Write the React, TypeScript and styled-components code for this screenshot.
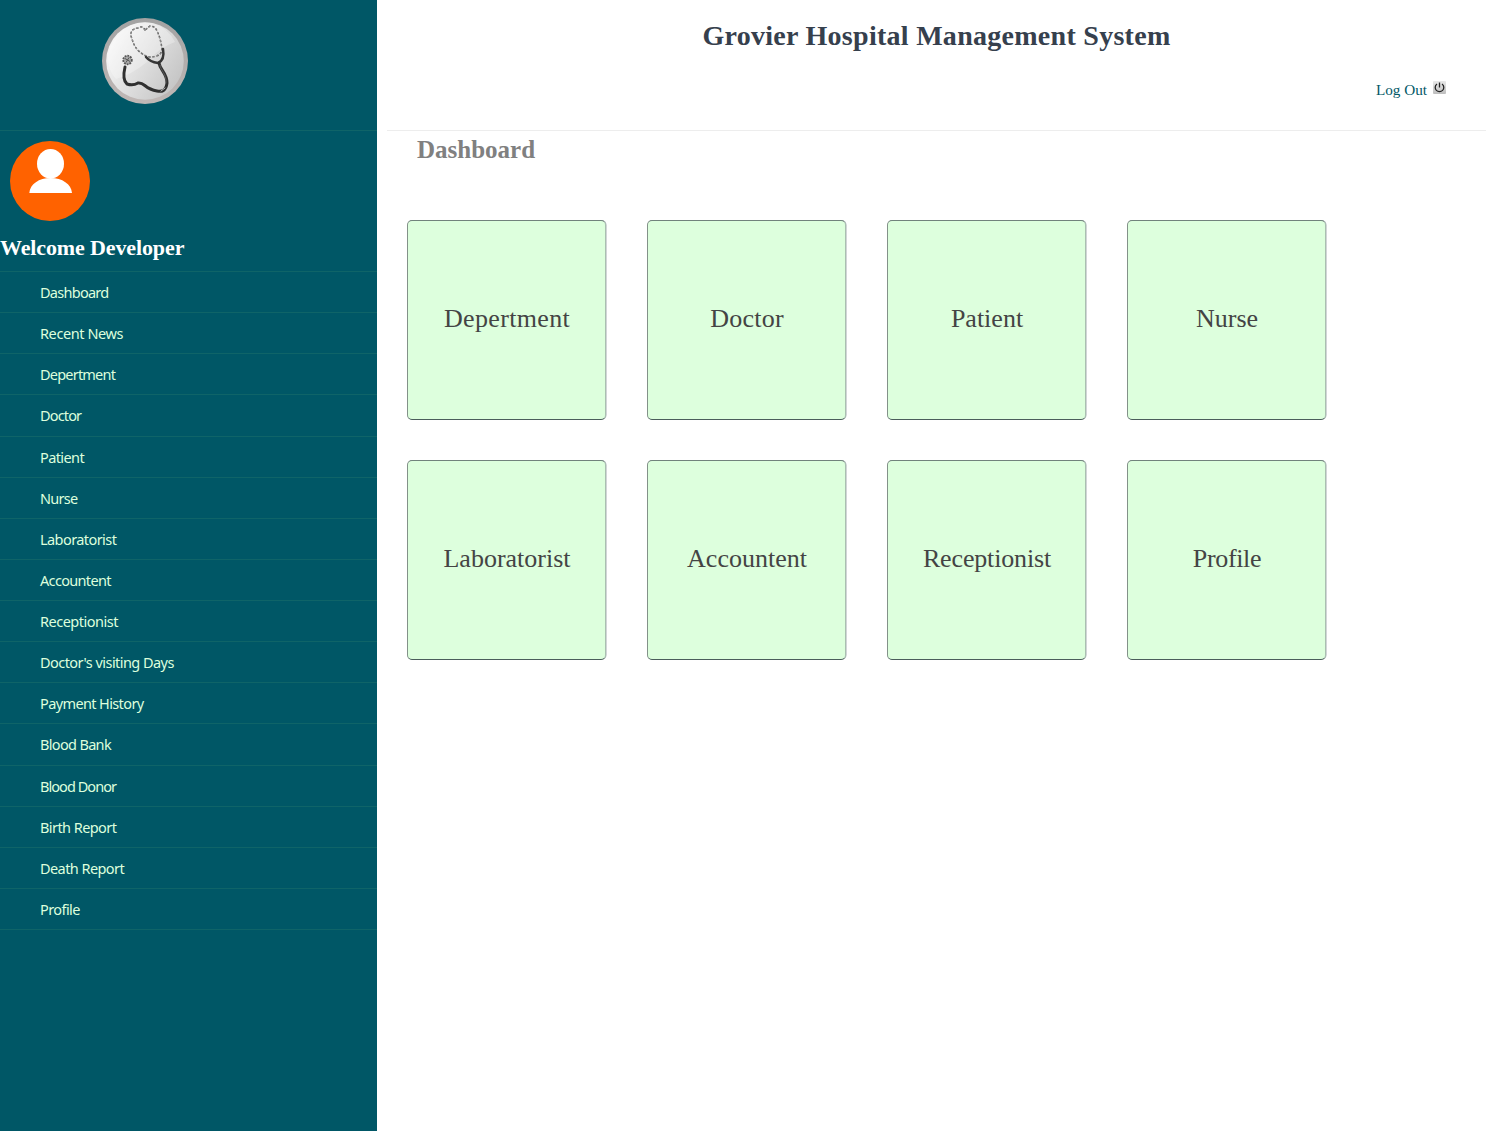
import React from "react";
import styled, { createGlobalStyle } from "styled-components";

const GlobalStyle = createGlobalStyle`
  * { box-sizing: border-box; }
  body { margin: 0; background: #fff; font-family: "Liberation Serif", serif; }
`;

const Page = styled.div`
  display: flex;
  height: 1131px;
  overflow: hidden;
`;

const Sidebar = styled.aside`
  flex: 0 0 377px;
  background: #005766;
`;

const LogoBar = styled.div`
  height: 131px;
  padding: 15.5px 0 0 100px;
  border-bottom: 1px solid #0f6468;
`;

const UserPanel = styled.section`
  height: 141px;
  padding: 10px 0 0;
  border-bottom: 1px solid #0f6468;
`;

const Avatar = styled.svg`
  display: block;
  margin-left: 10px;
`;

const Welcome = styled.h2`
  margin: 13px 0 0;
  font-size: 22px;
  line-height: 28px;
  letter-spacing: -0.12px;
  color: #fff;
`;

const Menu = styled.ul`
  margin: 0;
  padding: 0;
  list-style: none;
`;

const MenuItem = styled.li<{ $tracking: number }>`
  height: 41.125px;
  padding-left: 40px;
  border-bottom: 1px solid #0f6468;
  font: 14.5px/40.6px "Noto Sans", sans-serif;
  letter-spacing: ${(p) => p.$tracking}px;
  color: #ddffdd;
`;

const Main = styled.main`
  flex: 1;
  padding: 0 20px 0 10px;
`;

const Header = styled.header`
  height: 131px;
  padding-top: 18px;
  border-bottom: 1px solid #ededed;
`;

const Title = styled.h1`
  margin: 0;
  font-size: 28px;
  line-height: 36px;
  letter-spacing: 0.28px;
  text-align: center;
  color: #36404d;
`;

const LogOut = styled.a`
  display: flex;
  justify-content: flex-end;
  gap: 6px;
  margin-top: 26px;
  padding-right: 40px;
  font-size: 15.2px;
  line-height: 20px;
  color: #005766;

  svg {
    margin-top: 1px;
  }
`;

const Heading = styled.h2`
  margin: 4px 0 0 30px;
  font-size: 25px;
  line-height: 30px;
  color: #808080;
`;

const Cards = styled.div`
  display: grid;
  grid-template-columns: repeat(4, 199px);
  gap: 40px 41px;
  margin: 55px 0 0 20px;
`;

const Card = styled.div<{ $tracking: number }>`
  display: flex;
  align-items: center;
  justify-content: center;
  height: 200px;
  padding: 0 0 2px 1px;
  border: 1px solid;
  border-color: #71837c #a9bfb0 #4b5d5b #839189;
  border-radius: 5px;
  background: #ddffdd;
  box-shadow: 0.5px 0 0 #a5acb0;
  font-size: 26px;
  letter-spacing: ${(p) => p.$tracking}px;
  color: #444;
`;

const menu: [string, number][] = [
  ["Dashboard", -0.73],
  ["Recent News", -0.41],
  ["Depertment", -0.79],
  ["Doctor", -0.85],
  ["Patient", -0.6],
  ["Nurse", -0.75],
  ["Laboratorist", -0.57],
  ["Accountent", -0.67],
  ["Receptionist", -0.5],
  ["Doctor's visiting Days", -0.55],
  ["Payment History", -0.62],
  ["Blood Bank", -0.67],
  ["Blood Donor", -0.95],
  ["Birth Report", -0.57],
  ["Death Report", -0.57],
  ["Profile", -0.57],
];

const cards: [string, number][] = [
  ["Depertment", 0.33],
  ["Doctor", 0.25],
  ["Patient", 0],
  ["Nurse", 0],
  ["Laboratorist", 0],
  ["Accountent", 0],
  ["Receptionist", -0.15],
  ["Profile", -0.35],
];

const Stethoscope = () => (
  <svg width="90" height="90" viewBox="0 0 90 90">
    <defs>
      <linearGradient id="disc" x1="0" y1="0.2" x2="1" y2="0.8">
        <stop offset="0" stopColor="#fafafa" />
        <stop offset="1" stopColor="#c2c2c2" />
      </linearGradient>
      <linearGradient id="rim" x1="0" y1="0" x2="0" y2="1">
        <stop offset="0" stopColor="#a2a2a2" />
        <stop offset="1" stopColor="#c0b8b6" />
      </linearGradient>
    </defs>
    <circle cx="45" cy="45" r="43" fill="url(#rim)" />
    <circle cx="45" cy="45" r="38.8" fill="url(#disc)" />
    <path d="M47 46Q60 31 75 26Q68 12 54 7.500Q37 3 23 14Q13 22 8 38Q7 53 16 63Q31 59 47 46" fill="#fff" opacity="0.28" />
    <g fill="none" strokeLinecap="round">
      <path d="M45 14Q42 9 38 12Q30 13 31 20C34 29 35 34 46 40C51 42 61 41 62 34Q61 23 57 15Q55 10 50 10L45 14" stroke="#444" strokeWidth="1.500" strokeDasharray="1.500 2.600" />
      <path d="M45 14Q42 9 38 12Q30 13 31 20C34 29 35 34 46 40C51 42 61 41 62 34Q61 23 57 15Q55 10 50 10L45 14" stroke="#ddd" strokeWidth="0.500" />
      <path d="M46 41Q50 46 58 47Q65 44 63 33" stroke="#353535" strokeWidth="2.500" />
      <path d="M59 47C60 54 67 57 67 67C66 75 62 76 57 75C44 73 45 66 38 67Q33 70 27 68Q22 64 25 51" stroke="#303030" strokeWidth="3" />
      <path d="M60 49C60 54 67 58 66 67" stroke="#777" strokeWidth="0.600" />
      <path d="M61 75L65 72" stroke="#ddd" strokeWidth="0.800" />
    </g>
    <circle cx="27.500" cy="44" r="4.300" fill="#aaa" stroke="#555" strokeWidth="1.800" strokeDasharray="1.800 1" />
    <path d="M25 42.500L30 45.500M29 41.500L26 46.500" stroke="#555" strokeWidth="1" />
  </svg>
);

const PowerIcon = () => (
  <svg width="13" height="13" viewBox="0 0 13 13">
    <defs>
      <linearGradient id="key" x1="0" y1="0" x2="0" y2="1">
        <stop offset="0" stopColor="#e9e9e9" />
        <stop offset="1" stopColor="#bebebe" />
      </linearGradient>
    </defs>
    <rect width="13" height="13" rx="1" fill="url(#key)" />
    <path d="M4 3Q2.200 4.200 2.200 6.300A4.300 4.300 0 0 0 10.800 6.300Q10.800 4.200 9 3M6.500 1.500V6.500" fill="none" stroke="#222" strokeWidth="1.300" />
  </svg>
);

export default function App() {
  return (
    <Page>
      <GlobalStyle />
      <Sidebar>
        <LogoBar>
          <Stethoscope />
        </LogoBar>
        <UserPanel>
          <Avatar width="80" height="80" viewBox="0 0 80 80">
            <circle cx="40" cy="40" r="40" fill="#ff6200" />
            <ellipse cx="40.500" cy="22.800" rx="13.500" ry="14.800" fill="#fff" />
            <path d="M19.300 52C20 43 29 37 40.600 37S61.200 43 62 52Z" fill="#fff" />
          </Avatar>
          <Welcome>Welcome Developer</Welcome>
        </UserPanel>
        <Menu>
          {menu.map(([label, tracking]) => (
            <MenuItem key={label} $tracking={tracking}>{label}</MenuItem>
          ))}
        </Menu>
      </Sidebar>
      <Main>
        <Header>
          <Title>Grovier Hospital Management System</Title>
          <LogOut>
            Log Out
            <PowerIcon />
          </LogOut>
        </Header>
        <Heading>Dashboard</Heading>
        <Cards>
          {cards.map(([label, tracking]) => (
            <Card key={label} $tracking={tracking}>{label}</Card>
          ))}
        </Cards>
      </Main>
    </Page>
  );
}
